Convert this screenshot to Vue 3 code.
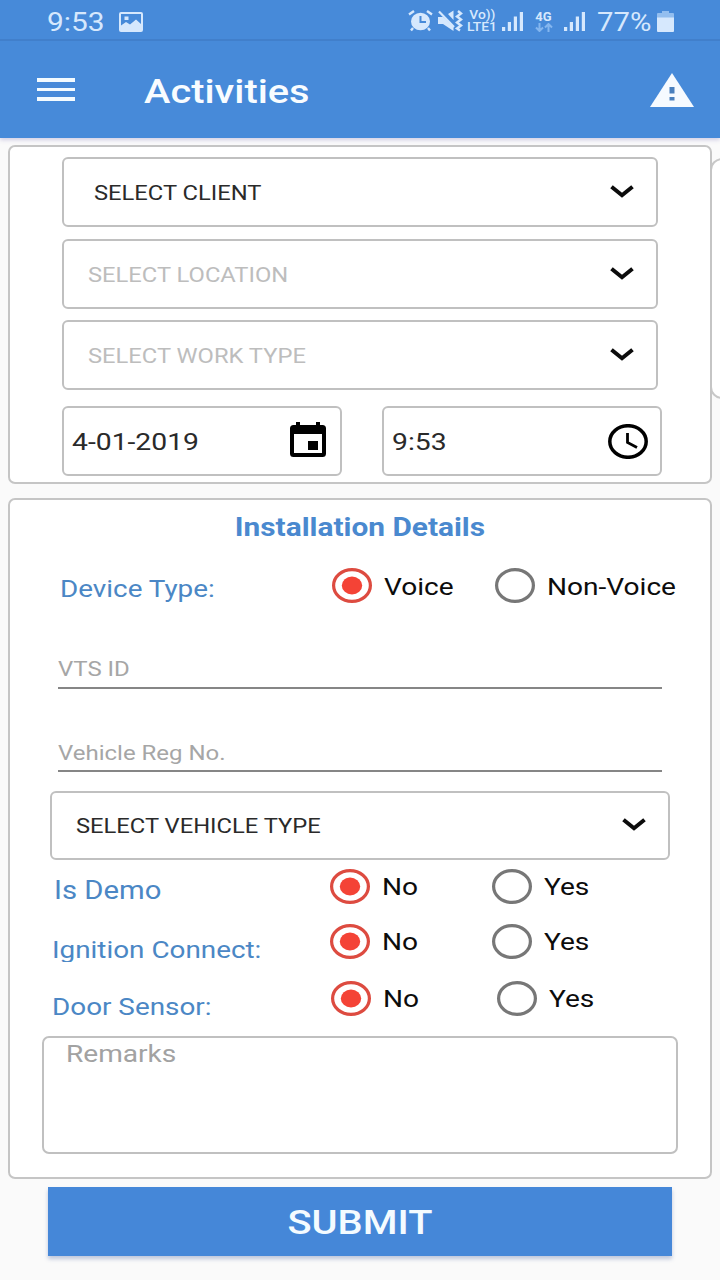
<template>
    <div class="screen">
        <header class="top">
            <div class="status-bar">
                <span class="status-time wide">{{ time }}</span>
                <svg class="status-picture" viewBox="0 0 24 20" fill="#d6e8fd">
                    <path fill-rule="evenodd" d="M2 0h20a2 2 0 0 1 2 2v16a2 2 0 0 1-2 2H2a2 2 0 0 1-2-2V2a2 2 0 0 1 2-2zM2 2v11.500l5-3.500 4 2.500 6-5 5 4.500V2zM5.500 4.500h4v3.500h-4z"/>
                </svg>
                <div class="status-icons">
                    <svg class="icon-alarm" viewBox="0 0 25 22">
                        <ellipse cx="12.500" cy="11.500" rx="9.500" ry="8.800" fill="#d6e8fd"/>
                        <path d="M1 4.500 6 1M24 4.500 19 1M5 18l-2 2.500M20 18l2 2.500" stroke="#d6e8fd" stroke-width="2.400" fill="none"/>
                        <path d="M12.500 6v6h5.500" stroke="#478ad9" stroke-width="2" fill="none"/>
                    </svg>
                    <svg class="icon-mute" viewBox="0 0 25 22">
                        <path d="M0 7h5l2 1.500L15.500 17v4L5 14H0zM10 4l5.500-3.500V10z" fill="#d6e8fd"/>
                        <path d="M1 1.500l15 15.500" stroke="#d6e8fd" stroke-width="2.200"/>
                        <path d="M20 1l3 2.500-4 3 4 3-4 3 4 3-4 3 3 2" stroke="#d6e8fd" stroke-width="2.400" fill="none"/>
                    </svg>
                    <div class="volte">
                        <span>Vo))</span>
                        <span>LTE1</span>
                    </div>
                    <svg class="icon-signal" viewBox="0 0 22 20" fill="#d6e8fd">
                        <path d="M0 16h3.200v4H0zM5.800 11h3.200v9H5.800zM11.800 5.500h3.200V20h-3.200zM17.800 1h3.200v19h-3.200z"/>
                    </svg>
                    <div class="network">
                        <span>4G</span>
                        <svg viewBox="0 0 18 9" fill="none" stroke="#84b6ef" stroke-width="2">
                            <path d="M4.500 0v8M1 4.500l3.500 3.500L8 4.500M13.500 9V1M10 4.500 13.500 1 17 4.500"/>
                        </svg>
                    </div>
                    <svg class="icon-signal" viewBox="0 0 22 20" fill="#d6e8fd">
                        <path d="M0 16h3.200v4H0zM5.800 11h3.200v9H5.800zM11.800 5.500h3.200V20h-3.200zM17.800 1h3.200v19h-3.200z"/>
                    </svg>
                    <span class="battery-text wide">77%</span>
                    <svg class="icon-battery" viewBox="0 0 17 21">
                        <path d="M5 0h7v2h4a1 1 0 0 1 1 1v4H0V3a1 1 0 0 1 1-1h4z" fill="#93beef"/>
                        <path d="M0 6.500h17V20a1 1 0 0 1-1 1H1a1 1 0 0 1-1-1z" fill="#d6e8fd"/>
                    </svg>
                </div>
            </div>
            <div class="app-bar">
                <button class="menu" aria-label="Menu">
                    <i></i><i></i><i></i>
                </button>
                <h1 class="wide">Activities</h1>
                <svg class="icon-warning" viewBox="0 0 44 34">
                    <path d="M22 0 44 34H0z" fill="#f6faff"/>
                    <path d="M19.500 14h5v6.500h-5zM19.500 24h5v3.500h-5z" fill="#4a7fbd"/>
                </svg>
            </div>
        </header>

        <!-- edge of the next page in the pager -->
        <div class="next-page"></div>

        <section class="card card-visit">
            <button v-for="item in selects"
                    :key="item.label"
                    :class="{disabled:item.disabled}"
                    class="select"
            >
                <span class="wide">{{ item.label }}</span>
                <svg class="chevron" viewBox="0 0 24 13"><path d="M1.500 1.800 12 10.300 22.500 1.800"/></svg>
            </button>
            <div class="date-row">
                <div class="picker">
                    <span class="wide">{{ date }}</span>
                    <svg class="icon-calendar" viewBox="0 0 36 35">
                        <path fill-rule="evenodd" d="M6 0h4v3h16V0h4v3h2.500A3.500 3.500 0 0 1 36 6.500v25a3.500 3.500 0 0 1-3.500 3.500h-29A3.500 3.500 0 0 1 0 31.500v-25A3.500 3.500 0 0 1 3.500 3H6zM4 12v19h28V12zM18 19h10v9H18z"/>
                    </svg>
                </div>
                <div class="picker">
                    <span class="wide">{{ time }}</span>
                    <svg class="icon-clock" viewBox="0 0 40 35" fill="none" stroke="#000">
                        <ellipse cx="20" cy="17.500" rx="18.200" ry="15.800" stroke-width="3.500"/>
                        <path d="M19.500 9v9.500l9.500 5" stroke-width="2.800"/>
                    </svg>
                </div>
            </div>
        </section>

        <section class="card card-install">
            <h2><span class="wide">Installation Details</span></h2>
            <div v-for="row in radioRows.slice(0,1)" :key="row.name" :class="row.name" class="radio-row">
                <span class="radio-title wide">{{ row.title }}</span>
                <label v-for="(option,index) in row.options" :key="option" class="radio" @click="row.selected=index">
                    <svg :class="{checked:row.selected===index}" viewBox="0 0 40 35">
                        <ellipse class="ring" cx="20" cy="17.500" rx="18.400" ry="15.900"/>
                        <ellipse class="dot" cx="20" cy="17.500" rx="10.200" ry="9"/>
                    </svg>
                    <span class="wide">{{ option }}</span>
                </label>
            </div>
            <div class="line-input"><span class="wide">VTS ID</span></div>
            <div class="line-input"><span class="wide">Vehicle Reg No.</span></div>
            <button class="select select-vehicle">
                <span class="wide">SELECT VEHICLE TYPE</span>
                <svg class="chevron" viewBox="0 0 24 13"><path d="M1.500 1.800 12 10.300 22.500 1.800"/></svg>
            </button>
            <div v-for="row in radioRows.slice(1)" :key="row.name" :class="row.name" class="radio-row">
                <span class="radio-title wide">{{ row.title }}</span>
                <label v-for="(option,index) in row.options" :key="option" class="radio" @click="row.selected=index">
                    <svg :class="{checked:row.selected===index}" viewBox="0 0 40 35">
                        <ellipse class="ring" cx="20" cy="17.500" rx="18.400" ry="15.900"/>
                        <ellipse class="dot" cx="20" cy="17.500" rx="10.200" ry="9"/>
                    </svg>
                    <span class="wide">{{ option }}</span>
                </label>
            </div>
            <div class="remarks"><span class="wide">Remarks</span></div>
        </section>

        <button class="submit"><span class="wide">SUBMIT</span></button>
    </div>
</template>

<script setup>
import {reactive, ref} from "vue";

const time = ref("9:53");
const date = ref("4-01-2019");

const selects = [
	{label: "SELECT CLIENT", disabled: false},
	{label: "SELECT LOCATION", disabled: true},
	{label: "SELECT WORK TYPE", disabled: true},
];

const radioRows = reactive([
	{name: "device", title: "Device Type:", options: ["Voice", "Non-Voice"], selected: 0},
	{name: "demo", title: "Is Demo", options: ["No", "Yes"], selected: 0},
	{name: "ignition", title: "Ignition Connect:", options: ["No", "Yes"], selected: 0},
	{name: "door", title: "Door Sensor:", options: ["No", "Yes"], selected: 0},
]);
</script>

<style>
body {
    margin: 0;
    background: #fafafa;
}
</style>

<style scoped>
.screen {
    position: relative;
    width: 720px;
    height: 1280px;
    overflow: hidden;
    background: #fafafa;
    font-family: Roboto, sans-serif;
    line-height: 1.172;
    color: #2a2a2a;
}

.screen * {
    box-sizing: border-box;
}

button {
    padding: 0;
    font-family: inherit;
    color: inherit;
    cursor: pointer;
}

svg {
    display: block;
    flex: none;
}

.wide {
    display: inline-block;
    white-space: nowrap;
    transform: scaleX(1.17);
    transform-origin: left center;
}

.top {
    height: 138px;
    background: #478ad9;
    box-shadow: 0 2px 4px rgba(90, 80, 170, .25);
}

.status-bar {
    display: flex;
    align-items: center;
    height: 41px;
    padding: 4px 46px 0 47px;
    border-bottom: 2px solid #417fcb;
    color: #d6e8fd;
}

.status-time {
    width: 72px;
    padding-top: 3px;
    font-size: 25.500px;
}

.status-picture {
    width: 24px;
    height: 20px;
}

.status-icons {
    display: flex;
    align-items: center;
    margin-left: auto;
}

.icon-alarm {
    width: 25px;
    height: 22px;
    margin-right: 5px;
}

.icon-mute {
    width: 25px;
    height: 22px;
    margin-right: 4px;
}

.volte {
    display: flex;
    flex-direction: column;
    width: 35px;
    font-size: 12px;
    font-weight: 500;
    line-height: 12px;
}

.volte span {
    transform: scaleX(1.15);
    transform-origin: left center;
}

.volte span:first-child {
    padding-left: 2px;
}

.icon-signal {
    width: 22px;
    height: 20px;
}

.network {
    display: flex;
    flex-direction: column;
    align-items: center;
    width: 19px;
    margin: 0 11px 0 10px;
    font-size: 13px;
    font-weight: 700;
    line-height: 12px;
}

.network svg {
    width: 18px;
    height: 9px;
}

.battery-text {
    width: 60px;
    padding-top: 3px;
    margin-left: 11px;
    font-size: 25px;
}

.icon-battery {
    width: 17px;
    height: 21px;
}

.app-bar {
    display: flex;
    align-items: center;
    height: 97px;
    padding: 0 26px 0 37px;
}

.menu {
    display: flex;
    flex-direction: column;
    gap: 6px;
    width: 38px;
    margin-right: 69px;
    border: 0;
    background: transparent;
}

.menu i {
    height: 3.500px;
    background: #f4fbff;
}

h1 {
    margin: 5px auto 0 0;
    font-size: 34px;
    font-weight: 500;
    color: #f8fcff;
}

.icon-warning {
    width: 44px;
    height: 34px;
}

.next-page {
    position: absolute;
    left: 710px;
    top: 158px;
    width: 40px;
    height: 241px;
    border: 2px solid #c8c8c8;
    border-radius: 12px;
    background: #fff;
}

.card {
    position: relative;
    width: 704px;
    margin-left: 8px;
    border: 2px solid #c5c5c5;
    border-radius: 7px;
    background: #fff;
}

.card-visit {
    height: 339px;
    margin-top: 7px;
    padding: 10px 48px 0 52px;
}

.select {
    display: flex;
    align-items: center;
    justify-content: space-between;
    width: 596px;
    height: 70px;
    margin-bottom: 11.500px;
    padding: 2px 22px 0 30px;
    border: 2px solid #c0c0c0;
    border-radius: 6px;
    background: #fff;
    font-size: 20.300px;
}

.select.disabled {
    padding-left: 24px;
    color: #bdbdbd;
}

.chevron {
    width: 24px;
    height: 13px;
    margin-top: -3px;
    fill: none;
    stroke: #0c0c0c;
    stroke-width: 4px;
}

.date-row {
    display: flex;
    gap: 40px;
    margin-top: 16px;
}

.picker {
    display: flex;
    align-items: center;
    justify-content: space-between;
    flex: none;
    width: 280px;
    height: 70px;
    padding: 0 13px 0 8px;
    border: 2px solid #c0c0c0;
    border-radius: 6px;
    font-size: 24.200px;
}

.picker .wide {
    padding-top: 2px;
}

.icon-calendar {
    width: 36px;
    height: 35px;
    margin: -3px 1px 0 0;
}

.icon-clock {
    width: 40px;
    height: 35px;
    margin-right: -1px;
}

.card-install {
    height: 681px;
    margin-top: 14px;
}

h2 {
    display: flex;
    justify-content: center;
    height: 30px;
    margin: 13px 0 0;
    font-size: 25.500px;
    font-weight: 700;
    color: #4a89cf;
}

h2 .wide {
    transform-origin: center;
}

.radio-row {
    display: grid;
    grid-template-columns: 270px 162px 1fr;
    grid-template-rows: 36px;
    align-items: center;
    height: 36px;
    padding-left: 50px;
    color: #0c0c0c;
    font-size: 24px;
}

.radio-title {
    justify-self: start;
    height: 28px;
    color: #4b87c5;
    font-size: 23.800px;
    line-height: 28px;
}

.radio {
    display: flex;
    align-items: center;
    gap: 12px;
    cursor: pointer;
}

.radio .wide {
    padding-top: 3px;
}

.radio svg {
    width: 40px;
    height: 35px;
}

.ring {
    fill: none;
    stroke: #777;
    stroke-width: 3.200px;
}

.dot {
    fill: none;
}

.checked .ring {
    stroke: #dd4b40;
}

.checked .dot {
    fill: #f44336;
}

.device {
    grid-template-columns: 271.500px 163.500px 1fr;
    margin: 24.500px 0 25px;
}

.device .radio-title {
    margin-top: 7px;
}

.demo .radio-title {
    margin: 10px 0 0 -6.500px;
    font-size: 25px;
}

.ignition {
    margin-top: 19px;
}

/* fixed height cuts the descender of the "g" */
.ignition .radio-title {
    height: 24px;
    margin: 18px 0 0 -8px;
    line-height: 24px;
    overflow: hidden;
}

.door {
    grid-template-columns: 270.500px 166.500px 1fr;
    margin-top: 21px;
}

.door .radio-title {
    margin: 18px 0 0 -8px;
}

.line-input {
    display: flex;
    align-items: center;
    width: 604px;
    height: 40px;
    margin: 0 0 43.500px 48px;
    border-bottom: 2px solid #868686;
    color: #a6a6a6;
    font-size: 20.500px;
}

.line-input .wide {
    padding-top: 4px;
}

.device + .line-input {
    margin-top: 45px;
}

.select-vehicle {
    width: 620px;
    height: 69px;
    margin: -24.500px 0 0 40px;
    padding: 1px 22px 0 24px;
}

.demo {
    margin-top: 8px;
}

.remarks {
    width: 636px;
    height: 118px;
    margin: 20px 0 0 32px;
    padding: 2px 22px;
    border: 2px solid #c0c0c0;
    border-radius: 7px;
    color: #a2a2a2;
    font-size: 24px;
}

.submit {
    display: flex;
    align-items: center;
    justify-content: center;
    width: 624px;
    height: 69px;
    margin: 7.500px 0 0 48px;
    padding-top: 2px;
    border: 0;
    background: #4587d8;
    box-shadow: 0 3px 4px rgba(50, 80, 150, .3);
    color: #f4fbff;
    font-size: 34px;
    font-weight: 500;
}

.submit .wide {
    transform-origin: center;
}
</style>
